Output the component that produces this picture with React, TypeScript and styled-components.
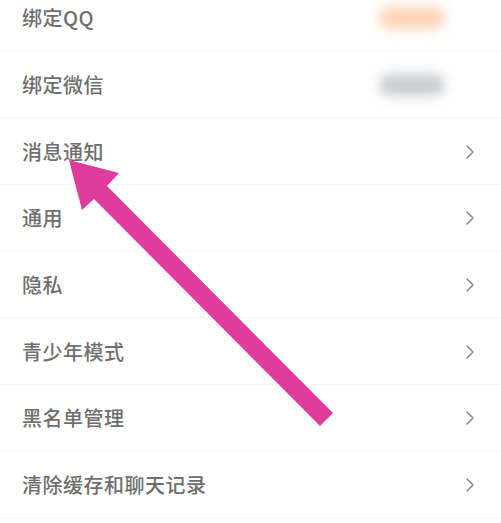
import React from "react";
import styled, { createGlobalStyle } from "styled-components";

const GlobalStyle = createGlobalStyle`
  html, body {
    margin: 0;
    padding: 0;
    background: #ffffff;
    overflow: hidden;
  }
  body {
    font-family: "Noto Sans CJK SC", "Noto Sans", sans-serif;
  }
`;

type Item = {
  label: string;
  trailing?: "chevron" | "qq" | "wechat";
};

const items: Item[] = [
  { label: "绑定QQ", trailing: "qq" },
  { label: "绑定微信", trailing: "wechat" },
  { label: "消息通知", trailing: "chevron" },
  { label: "通用", trailing: "chevron" },
  { label: "隐私", trailing: "chevron" },
  { label: "青少年模式", trailing: "chevron" },
  { label: "黑名单管理", trailing: "chevron" },
  { label: "清除缓存和聊天记录", trailing: "chevron" },
];

const Chevron = () => (
  <svg width="10" height="16" viewBox="0 0 10 16" fill="none">
    <path
      d="M2 2 L8 8 L2 14"
      stroke="#8a8a8a"
      strokeWidth="1.6"
      strokeLinecap="round"
      strokeLinejoin="round"
    />
  </svg>
);

const App: React.FC = () => {
  return (
    <>
      <GlobalStyle />
      <Page>
        <SettingsList>
          {items.map((item) => (
            <Row key={item.label}>
              <Label>{item.label}</Label>
              {item.trailing === "chevron" && (
                <ChevronWrap>
                  <Chevron />
                </ChevronWrap>
              )}
              {item.trailing === "qq" && <BlurPill $color="#fcd3b5" />}
              {item.trailing === "wechat" && <BlurPill $color="#c9cdd1" />}
            </Row>
          ))}
        </SettingsList>
        <ArrowOverlay width="501" height="523" viewBox="0 0 501 523">
          <polygon
            points="69,160 119,173 107,186 333,413 320,426 94,199 82,210"
            fill="#df3c9e"
          />
        </ArrowOverlay>
      </Page>
    </>
  );
};

export default App;

const Page = styled.div`
  position: relative;
  width: 501px;
  height: 523px;
  overflow: hidden;
  background: #fff;
`;

const SettingsList = styled.div`
  display: flex;
  flex-direction: column;
  margin-top: -15px;
`;

const Row = styled.div`
  display: flex;
  align-items: center;
  justify-content: space-between;
  height: 66.7px;
  box-sizing: border-box;
  padding: 0 26px 0 22px;
  border-bottom: 1px solid #f6f6f6;
`;

const Label = styled.span`
  font-size: 20px;
  font-weight: 500;
  color: #6e6e6e;
  letter-spacing: 0.5px;
`;

const ChevronWrap = styled.span`
  display: flex;
  align-items: center;
  margin-top: 1px;
`;

const BlurPill = styled.span<{ $color: string }>`
  width: 66px;
  height: 22px;
  margin-right: 30px;
  border-radius: 11px;
  background: ${(p) => p.$color};
  filter: blur(6px);
`;

const ArrowOverlay = styled.svg`
  position: absolute;
  left: 0;
  top: 0;
  pointer-events: none;
`;
